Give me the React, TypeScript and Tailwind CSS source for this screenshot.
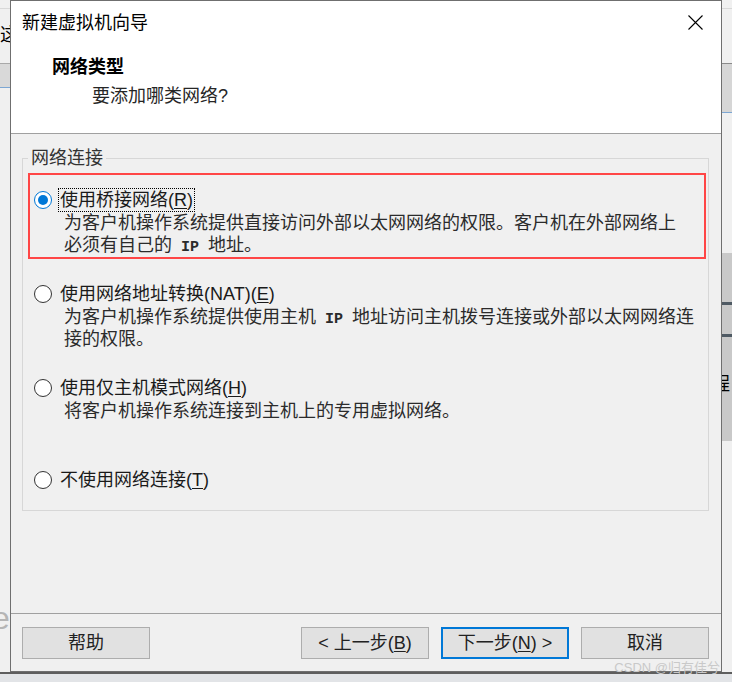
import type { ReactNode } from "react"

interface NetOption {
  key: string
  label: ReactNode
  lines: ReactNode[]
  checked?: boolean
  focused?: boolean
  boxClass: string
}

const Ip = () => <span className="font-['Liberation_Mono',monospace] font-bold text-[15px] leading-none"> IP </span>

const options: NetOption[] = [
  {
    key: "bridge",
    checked: true,
    focused: true,
    boxClass: "border-2 border-[#ff4646] pt-[13px] pb-[1px]",
    label: (
      <>
        使用桥接网络(<u className="underline-offset-2">R</u>)
      </>
    ),
    lines: [
      "为客户机操作系统提供直接访问外部以太网网络的权限。客户机在外部网络上",
      <>
        必须有自己的<Ip />地址。
      </>,
    ],
  },
  {
    key: "nat",
    boxClass: "mt-[21px] border-2 border-transparent",
    label: (
      <>
        使用网络地址转换(NAT)(<u className="underline-offset-2">E</u>)
      </>
    ),
    lines: [
      <>
        为客户机操作系统提供使用主机<Ip />地址访问主机拨号连接或外部以太网网络连
      </>,
      "接的权限。",
    ],
  },
  {
    key: "host",
    boxClass: "mt-[22px] border-2 border-transparent",
    label: (
      <>
        使用仅主机模式网络(<u className="underline-offset-2">H</u>)
      </>
    ),
    lines: ["将客户机操作系统连接到主机上的专用虚拟网络。"],
  },
  {
    key: "none",
    boxClass: "mt-[42px] border-2 border-transparent",
    label: (
      <>
        不使用网络连接(<u className="underline-offset-2">T</u>)
      </>
    ),
    lines: [],
  },
]

function Radio({ checked }: { checked?: boolean }) {
  if (checked) {
    return (
      <span className="w-[18px] h-[18px] rounded-full border border-[#0078d7] bg-white flex items-center justify-center shrink-0">
        <span className="w-[10px] h-[10px] rounded-full bg-[#0078d7]" />
      </span>
    )
  }
  return <span className="w-[18px] h-[18px] rounded-full border-[1.5px] border-[#333] bg-white shrink-0" />
}

function Button({ children, primary }: { children: ReactNode; primary?: boolean }) {
  return (
    <button
      className={`w-[128px] h-[32px] flex items-center justify-center bg-[#e1e1e1] text-[18px] leading-none text-[#222] ${
        primary ? "border-2 border-[#0078d7]" : "border border-[#adadad]"
      }`}
    >
      {children}
    </button>
  )
}

export default function App() {
  return (
    <div className="relative w-[732px] h-[682px] overflow-hidden bg-[#f0f0f0] font-['Liberation_Sans','Noto_Sans_CJK_SC',sans-serif]">
      {/* window behind the wizard */}
      <div className="absolute left-0 top-[8px] w-full h-px bg-[#d8d8d8]" />
      <span className="absolute left-0 top-[23px] text-[18px] leading-[24px] text-black">这</span>
      <div className="absolute left-0 top-[63px] w-[20px] h-[25px] bg-[#d9d9d9] border-t border-[#a9a9a9] border-b border-b-[#7da7d3]" />
      <div className="absolute right-0 top-[63px] w-[20px] h-[50px] bg-[#d6d6d6] border-t border-[#8a8a8a] border-b border-b-[#7da7d3]" />
      <div className="absolute right-0 top-[253px] w-[20px] h-[188px] bg-[#c9c9c9]">
        <div className="mt-[49px] h-[3px] bg-[#4f5a64]" />
        <div className="mt-[29px] h-[3px] bg-[#4f5a64]" />
      </div>
      <span className="absolute left-[712px] top-[372px] text-[18px] leading-[24px] text-black">程</span>
      <span className="absolute -left-[8px] top-[600px] text-[32px] leading-[36px] text-[#b5b5b5]">e</span>
      <div className="absolute left-0 bottom-0 w-full h-[10px] bg-[#e2e4e7] border-t-2 border-[#5e5e5e]" />

      {/* wizard dialog */}
      <div className="absolute left-[10px] top-0 w-[712px] h-[672px] border border-[#6f6f6f] bg-[#f0f0f0] flex flex-col">
        <div className="h-[133px] bg-white border-b border-[#a0a0a0] shrink-0">
          <div className="h-[43px] flex items-center justify-between pl-[11px] pr-[18px]">
            <span className="text-[18px] leading-[24px] text-black">新建虚拟机向导</span>
            <svg width="15" height="15" viewBox="0 0 15 15">
              <path d="M0.5 0.5 L14.5 14.5 M14.5 0.5 L0.5 14.5" stroke="#000" strokeWidth="1.1" fill="none" />
            </svg>
          </div>
          <div className="mt-[11px] pl-[41px] text-[18px] leading-[24px] font-bold text-black">网络类型</div>
          <div className="mt-[5px] pl-[81px] text-[18px] leading-[24px] text-[#262626]">要添加哪类网络?</div>
        </div>

        <div className="flex-1 px-[11px] pt-[24px]">
          <div className="relative w-[687px] h-[353px] border border-[#d7d7d7] pt-[14px]">
            <span className="absolute -top-[13px] left-[5px] px-[3px] bg-[#f0f0f0] text-[18px] leading-[24px] text-[#333]">
              网络连接
            </span>
            {options.map((opt) => (
              <div key={opt.key} className={`ml-[5px] w-[678px] ${opt.boxClass}`}>
                <div className="h-[24px] flex items-center pl-[4px]">
                  <Radio checked={opt.checked} />
                  <span
                    className={`ml-[6px] px-[1px] text-[18px] leading-[22px] text-[#1a1a1a] whitespace-nowrap border ${
                      opt.focused ? "border-dotted border-black" : "border-transparent"
                    }`}
                  >
                    {opt.label}
                  </span>
                </div>
                {opt.lines.map((line, i) => (
                  <div key={i} className="h-[22px] pl-[34px] text-[18px] leading-[22px] text-[#2b2b2b] whitespace-nowrap">
                    {line}
                  </div>
                ))}
              </div>
            ))}
          </div>
        </div>

        <div className="h-[58px] shrink-0 border-t border-[#a0a0a0] flex items-start pt-[13px] pl-[11px] pr-[12px]">
          <Button>帮助</Button>
          <div className="ml-auto flex gap-[12px]">
            <Button>
              &lt; 上一步(<u className="underline-offset-2">B</u>)
            </Button>
            <Button primary>
              下一步(<u className="underline-offset-2">N</u>) &gt;
            </Button>
            <Button>取消</Button>
          </div>
        </div>
      </div>

      <span className="absolute right-[12px] bottom-[7px] text-[13px] leading-[14px] text-[#c9c9c9]">CSDN @归有佳兮</span>
    </div>
  )
}
